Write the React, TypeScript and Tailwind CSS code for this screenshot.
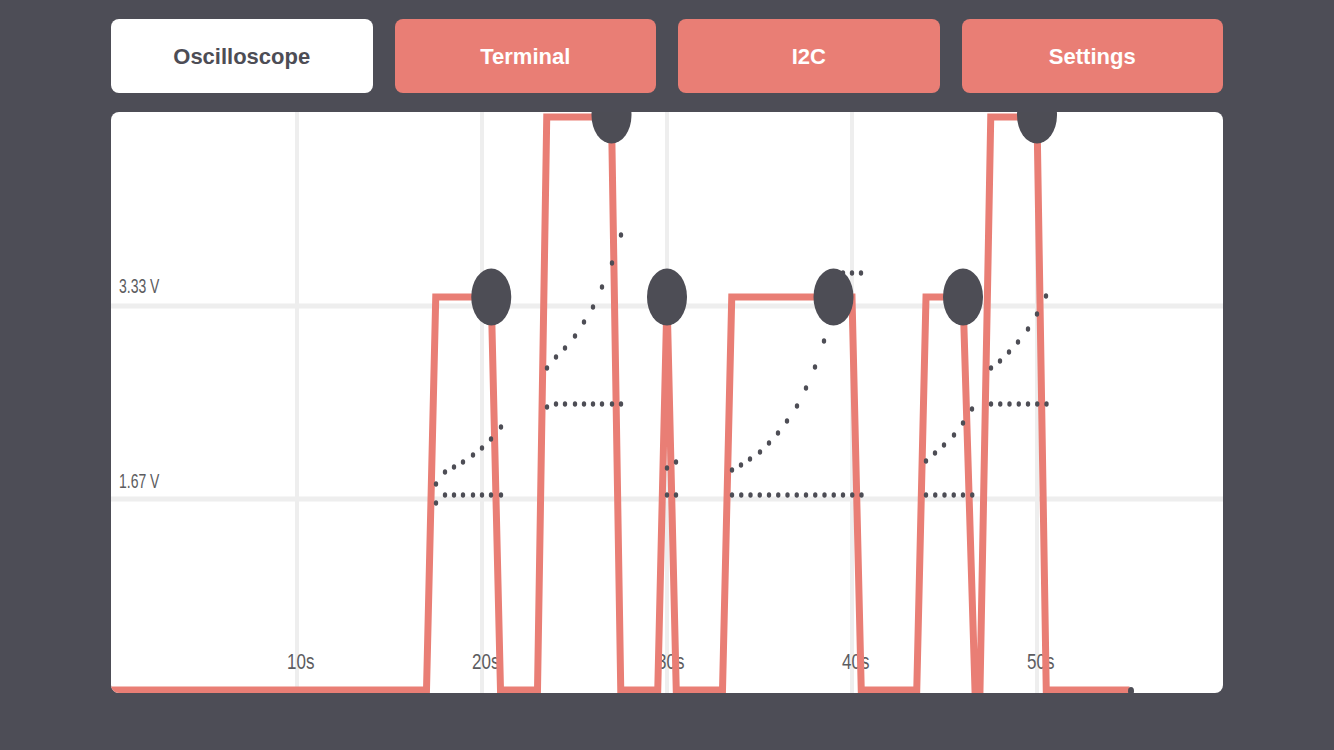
import React from "react";

const L = 690;
const M = 297;
const H = 117;

const redPts: [number, number][] = [
  [100, L], [426.5, L], [435.75, M], [491.25, M], [500.5, L], [537.5, L], [546.75, H],
  [611.5, H], [620.75, L], [657.75, L], [667, M], [676.25, L], [722.5, L], [731.75, M],
  [852, M], [861.25, L], [916.75, L], [926, M], [963, M], [975, L], [980, L], [990.75, H],
  [1037, H], [1046.25, L], [1129.5, L],
];

const dots: [number, number][] = [
  [436, 503], [445, 495], [454, 495], [463, 495], [473, 495], [482, 495], [491, 495], [501, 495],
  [436, 484], [445, 472], [454, 467], [463, 462], [473, 455], [482, 448], [491, 439], [501, 427],
  [547, 368], [556, 357], [565, 348], [575, 336], [584, 322], [593, 307], [602, 287], [612, 263], [621, 235],
  [547, 407], [556, 404], [565, 404], [575, 404], [584, 404], [593, 404], [602, 404], [612, 404], [621, 404],
  [667, 468], [676, 462], [667, 495], [676, 495],
  [732, 470], [741, 465], [750, 459], [760, 452], [769, 443], [778, 433], [787, 421], [797, 406],
  [806, 388], [815, 367], [824, 341], [834, 310], [843, 273], [852, 273], [861, 273],
  [926, 461], [935, 453], [944, 445], [954, 435], [963, 423], [972, 409],
  [991, 368], [1000, 361], [1009, 352], [1018, 342], [1028, 329], [1037, 314], [1046, 296],
];
for (let i = 0; i < 15; i++) dots.push([732 + i * 9.25, 495]);
for (let i = 0; i < 6; i++) dots.push([926 + i * 9.25, 495]);
for (let i = 0; i < 7; i++) dots.push([991 + i * 9.25, 404]);

const markers: [number, number][] = [
  [491.25, 297], [611.5, 115], [667, 297], [833.5, 297], [963, 297], [1037, 115],
];

const gridX = [297, 482, 667, 852, 1037];
const xLabels = ["10s", "20s", "30s", "40s", "50s"];

function Chart() {
  const d = redPts.map((p, i) => `${i === 0 ? "M" : "L"}${p[0]} ${p[1]}`).join(" ");
  return (
    <svg
      width="100%"
      height="100%"
      viewBox="111 112 1112 581"
      preserveAspectRatio="none"
      className="block"
    >
      {gridX.map((x) => (
        <line key={x} x1={x} y1={100} x2={x} y2={700} stroke="#eeeeee" strokeWidth={4} />
      ))}
      <line x1={100} y1={306} x2={1240} y2={306} stroke="#eeeeee" strokeWidth={5} />
      <line x1={100} y1={499} x2={1240} y2={499} stroke="#eeeeee" strokeWidth={5} />
      <g fill="#5c5c60" fontFamily="'Liberation Sans', Arial, sans-serif">
        <text transform="translate(119 293) scale(1 1.5)" fontSize={14}>3.33 V</text>
        <text transform="translate(119 488) scale(1 1.5)" fontSize={14}>1.67 V</text>
        {gridX.map((x, i) => (
          <text key={x} transform={`translate(${x - 10} 669) scale(1 1.35)`} fontSize={17}>
            {xLabels[i]}
          </text>
        ))}
      </g>
      <path d={d} fill="none" stroke="#e97e75" strokeWidth={7} strokeLinejoin="miter" />
      {dots.map((p, i) => (
        <ellipse key={i} cx={p[0]} cy={p[1]} rx={2.2} ry={2.8} fill="#4d4d55" />
      ))}
      {markers.map((p, i) => (
        <ellipse key={i} cx={p[0]} cy={p[1]} rx={20} ry={28.5} fill="#4d4d55" />
      ))}
      <ellipse cx={1131} cy={691} rx={3} ry={4} fill="#4d4d55" />
    </svg>
  );
}

export default function App() {
  const tabs = ["Oscilloscope", "Terminal", "I2C", "Settings"];
  return (
    <div
      className="w-[1334px] h-[750px] bg-[#4d4d56] px-[111px] pt-[19px]"
      style={{ fontFamily: "'Liberation Sans', Arial, sans-serif" }}
    >
      <div className="grid grid-cols-4 gap-[22px]">
        {tabs.map((t, i) => (
          <div
            key={t}
            className={
              i === 0
                ? "h-[74px] rounded-[8px] bg-white text-[#4d4d55] flex items-center justify-center text-[22px] font-bold"
                : "h-[74px] rounded-[8px] bg-[#e97e75] text-white flex items-center justify-center text-[22px] font-bold"
            }
          >
            {t}
          </div>
        ))}
      </div>
      <div className="mt-[19px] h-[581px] bg-white rounded-[8px] overflow-hidden">
        <Chart />
      </div>
    </div>
  );
}
